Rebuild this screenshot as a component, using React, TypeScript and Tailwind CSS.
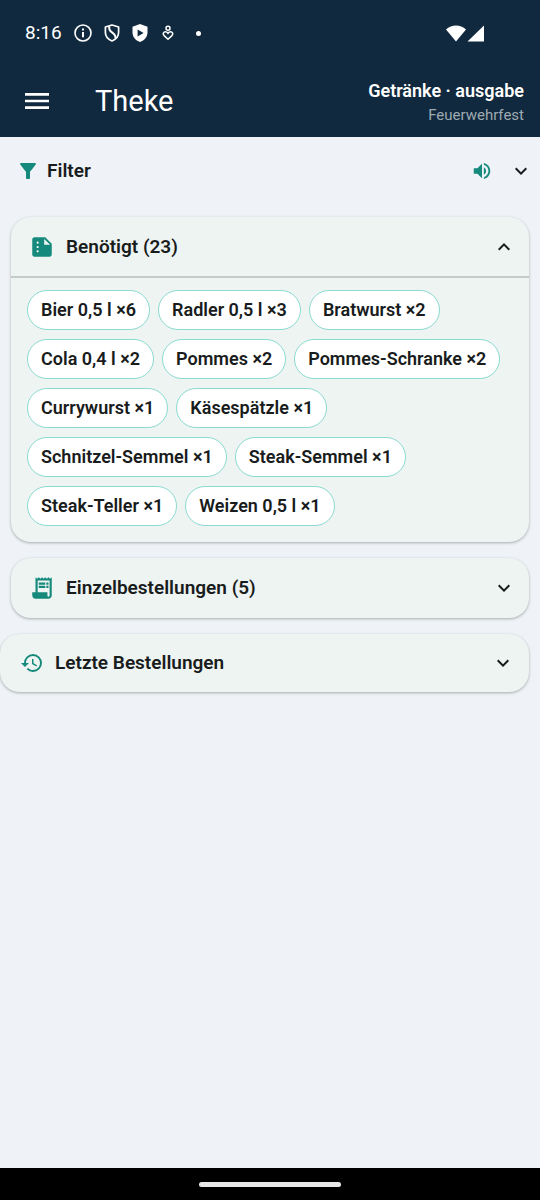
import { useState } from "react";
import type { ReactNode } from "react";
import {
  MdExpandLess,
  MdExpandMore,
  MdFilterAlt,
  MdHistory,
  MdMenu,
  MdReceiptLong,
  MdSummarize,
  MdVolumeUp,
} from "react-icons/md";
import clsx from "clsx";

const needed = [
  { name: "Bier 0,5 l", count: 6 },
  { name: "Radler 0,5 l", count: 3 },
  { name: "Bratwurst", count: 2 },
  { name: "Cola 0,4 l", count: 2 },
  { name: "Pommes", count: 2 },
  { name: "Pommes-Schranke", count: 2 },
  { name: "Currywurst", count: 1 },
  { name: "Käsespätzle", count: 1 },
  { name: "Schnitzel-Semmel", count: 1 },
  { name: "Steak-Semmel", count: 1 },
  { name: "Steak-Teller", count: 1 },
  { name: "Weizen 0,5 l", count: 1 },
];

function StatusBar() {
  return (
    <div className="flex h-[66px] items-center pr-14 pl-[25px] text-white">
      <span className="text-[19px] leading-6">8:16</span>
      <div className="flex flex-1 items-center gap-3 pl-3">
        <svg className="size-[18px]" viewBox="0 0 18 18" fill="none" stroke="currentColor" strokeWidth="1.6">
          <circle cx="9" cy="9" r="8" />
          <path d="M9 8v5.2M9 4.6v2" strokeWidth="2" />
        </svg>
        <svg className="h-[18px] w-4" viewBox="0 0 16 18" fill="none" stroke="currentColor" strokeWidth="1.7">
          <path d="M8 1 14.6 3v5.6c0 4-2.8 6.9-6.6 8.4C4.2 15.5 1.4 12.6 1.4 8.6V3z" strokeLinejoin="round" />
          <path d="M5.4 2.2c-.8 3 .2 4.6 2.6 6.2 2.6 1.8 4 3.6 3.4 6.2" strokeWidth="2" />
        </svg>
        <svg className="h-[18px] w-4" viewBox="0 0 16 18" fill="currentColor">
          <path fillRule="evenodd" d="M8 0 15.5 2.7V8.6c0 4.4-3 7.9-7.5 9.4C3.5 16.5.5 13 .5 8.6V2.7zM5.6 5.4v7L11.6 8.9z" />
        </svg>
        <svg className="ml-0.5 h-4 w-3" viewBox="0 0 12 16" fill="none" stroke="currentColor" strokeWidth="1.5">
          <circle cx="6" cy="3.2" r="2" />
          <path d="M6 14.2 2.1 10.6C.4 8.8 1.6 6.8 3.4 6.8c1.2 0 2 .7 2.6 1.6.6-.9 1.4-1.6 2.6-1.6 1.8 0 3 2 1.3 3.8z" />
        </svg>
        <span className="ml-2.5 size-[5px] rounded-full bg-white" />
      </div>
      <svg className="h-[17px] w-[38px]" viewBox="0 0 38 17" fill="currentColor">
        <path d="M0 4.5C5.5-.9 14.5-.9 20 4.5L10 16.5z" />
        <path d="M38 .5v16H21.5z" />
      </svg>
    </div>
  );
}

type SectionProps = {
  icon: ReactNode;
  title: string;
  className?: string;
  headerClassName?: string;
  defaultOpen?: boolean;
  children?: ReactNode;
};

function Section({ icon, title, className, headerClassName, defaultOpen = false, children }: SectionProps) {
  const [open, setOpen] = useState(defaultOpen);
  const Chevron = open ? MdExpandLess : MdExpandMore;

  return (
    <section className={clsx("mr-[11px] overflow-hidden rounded-[20px] bg-[#eef4f2] shadow-[0_1px_3px_rgba(0,0,0,0.3)]", className)}>
      <button
        type="button"
        aria-expanded={open}
        onClick={() => setOpen(!open)}
        className={clsx("flex w-full items-center text-left", headerClassName)}
      >
        <span className="text-[#15897b]">{icon}</span>
        <span className="flex-1 text-[19px] leading-6 font-semibold">{title}</span>
        <Chevron className="size-6" />
      </button>
      {open && children}
    </section>
  );
}

export default function App() {
  return (
    <div className="flex min-h-screen flex-col bg-[#eff3f7] font-[Roboto,sans-serif] text-[#191c1c]">
      <header className="bg-[#10293e] text-white">
        <StatusBar />
        <div className="flex items-center pt-[11px] pr-4 pb-3 pl-[21px]">
          <button type="button" aria-label="Menü">
            <MdMenu className="size-8" />
          </button>
          <h1 className="flex-1 pl-[42px] text-[29px] leading-10">Theke</h1>
          <div className="flex flex-col items-end">
            <span className="text-lg leading-7 font-semibold">Getränke · ausgabe</span>
            <span className="text-[15px] leading-5 text-[#9fa9b2]">Feuerwehrfest</span>
          </div>
        </div>
      </header>

      <main className="flex-1">
        <div className="flex h-[68px] items-center pr-[7px] pl-4">
          <MdFilterAlt className="size-6 text-[#15897b]" />
          <h2 className="flex-1 pl-[7px] text-[19px] leading-6 font-semibold">Filter</h2>
          <button type="button" aria-label="Ton" className="text-[#15897b]">
            <MdVolumeUp className="size-[22px]" />
          </button>
          <button type="button" aria-label="Filter öffnen" className="pl-4">
            <MdExpandMore className="size-6" />
          </button>
        </div>

        <div className="flex flex-col gap-4 pt-3">
          <Section
            icon={<MdSummarize className="size-[26px]" />}
            title="Benötigt (23)"
            className="ml-[11px]"
            headerClassName="h-[59px] gap-[11px] pr-[13px] pl-[18px]"
            defaultOpen
          >
            <ul className="flex flex-wrap gap-x-2 gap-y-[9px] border-t-2 border-[#c3ccca] px-4 pt-3 pb-4">
              {needed.map((item) => (
                <li
                  key={item.name}
                  className="flex h-10 items-center rounded-full border border-[#8adad0] bg-white px-[13px] text-lg leading-6 font-semibold"
                >
                  {item.name} ×{item.count}
                </li>
              ))}
            </ul>
          </Section>

          <Section
            icon={<MdReceiptLong className="size-[26px]" />}
            title="Einzelbestellungen (5)"
            className="ml-[11px]"
            headerClassName="h-[60px] gap-[11px] pr-[13px] pl-[18px]"
          />

          <Section
            icon={<MdHistory className="size-6" />}
            title="Letzte Bestellungen"
            headerClassName="h-[58px] gap-[11px] pr-[14px] pl-5"
          />
        </div>
      </main>

      <footer className="flex h-8 items-center justify-center bg-black">
        <span className="h-[5px] w-[142px] rounded-full bg-[#e8e8e8]" />
      </footer>
    </div>
  );
}
